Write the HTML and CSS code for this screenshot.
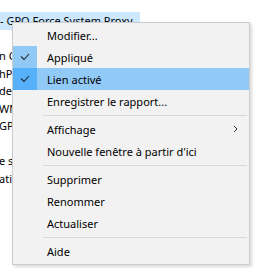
FILE: index.html
```html
<!DOCTYPE html>
<html lang="fr">
<head>
<meta charset="UTF-8">
<link rel="stylesheet" href="styles.css">
<title>Menu contextuel</title>
</head>
<body>
<div class="tree">
  <div class="node selected">- GPO Force System Proxy</div>
  <div class="node"></div>
  <div class="node cut">n Controllers</div>
  <div class="node cut">hProxy</div>
  <div class="node cut">de</div>
  <div class="node cut">WMI Filters</div>
  <div class="node cut">GPO</div>
  <div class="node"></div>
  <div class="node cut">e starter</div>
  <div class="node cut">ations</div>
</div>

<div class="menu">
  <div class="item"><span class="mark"></span><span class="label">Modifier...</span></div>
  <div class="item checked">
    <span class="mark"><svg width="10" height="8" viewBox="0 0 10 8"><path d="M1 3.5 L4 6.5 L9 1" fill="none" stroke="#262626" stroke-width="1.1"/></svg></span>
    <span class="label">Appliqué</span>
  </div>
  <div class="item checked hover">
    <span class="mark"><svg width="10" height="8" viewBox="0 0 10 8"><path d="M1 3.5 L4 6.5 L9 1" fill="none" stroke="#262626" stroke-width="1.1"/></svg></span>
    <span class="label">Lien activé</span>
  </div>
  <div class="item"><span class="mark"></span><span class="label">Enregistrer le rapport...</span></div>
  <div class="sep"></div>
  <div class="item">
    <span class="mark"></span><span class="label">Affichage</span>
    <span class="arrow"><svg width="5" height="8" viewBox="0 0 5 8"><path d="M1 1 L4 4 L1 7" fill="none" stroke="#333" stroke-width="1"/></svg></span>
  </div>
  <div class="item"><span class="mark"></span><span class="label">Nouvelle fenêtre à partir d'ici</span></div>
  <div class="sep"></div>
  <div class="item"><span class="mark"></span><span class="label">Supprimer</span></div>
  <div class="item"><span class="mark"></span><span class="label">Renommer</span></div>
  <div class="item"><span class="mark"></span><span class="label">Actualiser</span></div>
  <div class="sep"></div>
  <div class="item"><span class="mark"></span><span class="label">Aide</span></div>
</div>
</body>
</html>
```

FILE: styles.css
```css
body {
  margin: 0;
  background-color: #ffffff;
  font-family: "Noto Sans", sans-serif;
  font-size: 11px;
  color: #000000;
  width: 271px;
  height: 275px;
  overflow: hidden;
  position: relative;
}

/* tree view behind the menu */
.tree {
  padding-top: 12px;
}
.node {
  height: 17.5px;
  line-height: 17.5px;
  white-space: nowrap;
  overflow: hidden;
}
.node.selected {
  width: 140px;
  background-color: #cce8ff;
}
.node.cut {
  width: 13px;
  text-indent: -1px;
}

/* context menu */
.menu {
  position: absolute;
  left: 12px;
  top: 22px;
  width: 236px;
  padding: 1px 0 2px 0;
  background-color: #f2f2f2;
  border: 1px solid #cccccc;
  box-shadow: 2px 2px 3px rgba(0, 0, 0, 0.15);
  color: #000000;
}
.item {
  display: flex;
  align-items: center;
  height: 22px;
}
.mark {
  width: 24px;
  height: 22px;
  display: flex;
  align-items: center;
  justify-content: center;
}
.label {
  flex: 1;
  padding-left: 10px;
  white-space: nowrap;
}
.arrow {
  width: 16px;
  display: flex;
  align-items: center;
}
.checked .mark {
  background-color: #90c8f6;
}
.hover {
  background-color: #91c9f7;
}
.hover .mark {
  background-color: #56b0fa;
}
.sep {
  height: 1px;
  margin: 3px 2px 2px 30px;
  background-color: #d7d7d7;
}
```
